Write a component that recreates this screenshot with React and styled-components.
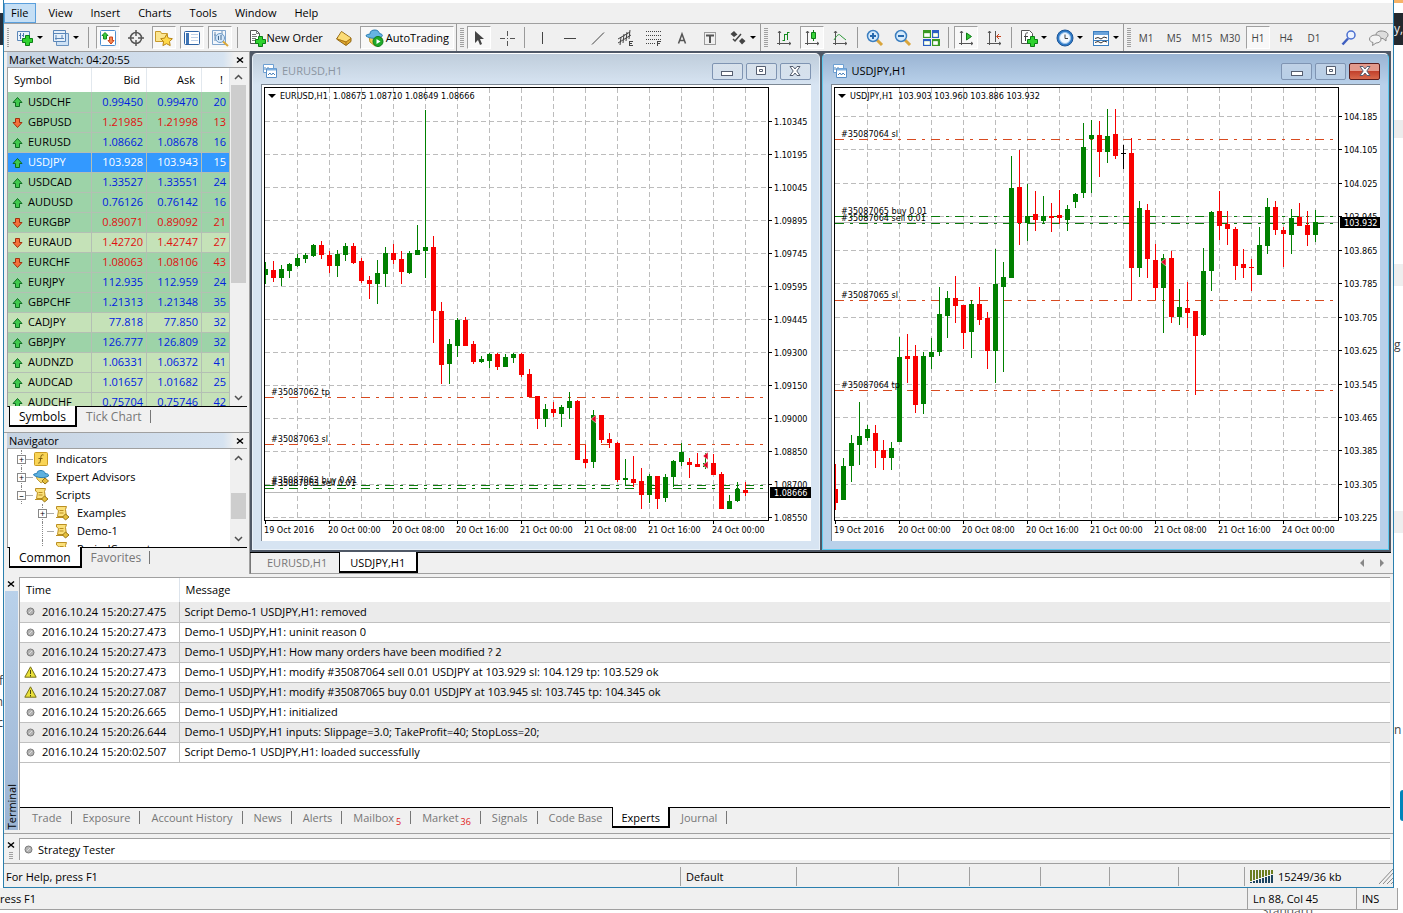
import React from 'react'
import styled, { createGlobalStyle } from 'styled-components'


const quotes = [
    ['USDCHF', 'up', '0.99450', '0.99470', 20, 0],
    ['GBPUSD', 'down', '1.21985', '1.21998', 13, 0],
    ['EURUSD', 'up', '1.08662', '1.08678', 16, 0],
    ['USDJPY', 'up', '103.928', '103.943', 15, 2],
    ['USDCAD', 'up', '1.33527', '1.33551', 24, 0],
    ['AUDUSD', 'up', '0.76126', '0.76142', 16, 0],
    ['EURGBP', 'down', '0.89071', '0.89092', 21, 0],
    ['EURAUD', 'down', '1.42720', '1.42747', 27, 1],
    ['EURCHF', 'down', '1.08063', '1.08106', 43, 0],
    ['EURJPY', 'up', '112.935', '112.959', 24, 0],
    ['GBPCHF', 'up', '1.21313', '1.21348', 35, 0],
    ['CADJPY', 'up', '77.818', '77.850', 32, 1],
    ['GBPJPY', 'up', '126.777', '126.809', 32, 0],
    ['AUDNZD', 'up', '1.06331', '1.06372', 41, 1],
    ['AUDCAD', 'up', '1.01657', '1.01682', 25, 1],
    ['AUDCHF', 'up', '0.75704', '0.75746', 42, 1],
]

const logs = [
    ['2016.10.24 15:20:27.475', 'Script Demo-1 USDJPY,H1: removed'],
    ['2016.10.24 15:20:27.473', 'Demo-1 USDJPY,H1: uninit reason 0'],
    ['2016.10.24 15:20:27.473', 'Demo-1 USDJPY,H1: How many orders have been modified ? 2'],
    ['2016.10.24 15:20:27.473', 'Demo-1 USDJPY,H1: modify #35087064 sell 0.01 USDJPY at 103.929 sl: 104.129 tp: 103.529 ok', true],
    ['2016.10.24 15:20:27.087', 'Demo-1 USDJPY,H1: modify #35087065 buy 0.01 USDJPY at 103.945 sl: 103.745 tp: 104.345 ok', true],
    ['2016.10.24 15:20:26.665', 'Demo-1 USDJPY,H1: initialized'],
    ['2016.10.24 15:20:26.644', 'Demo-1 USDJPY,H1 inputs: Slippage=3.0; TakeProfit=40; StopLoss=20;'],
    ['2016.10.24 15:20:02.507', 'Script Demo-1 USDJPY,H1: loaded successfully'],
]

const terminalTabs = ['Trade', 'Exposure', 'Account History', 'News', 'Alerts', 'Mailbox', 'Market', 'Signals', 'Code Base', 'Experts', 'Journal']
const tabCounts = { Mailbox: 5, Market: 36 }

// candles: wick top, wick bottom, body top, body bottom, colour
const eurusd = {
    title: 'EURUSD,H1',
    info: 'EURUSD,H1  1.08675 1.08710 1.08649 1.08666',
    prices: [['1.10345', 36], ['1.10195', 69], ['1.10045', 102], ['1.09895', 135], ['1.09745', 168], ['1.09595', 201], ['1.09445', 234], ['1.09300', 267], ['1.09150', 300], ['1.09000', 333], ['1.08850', 366], ['1.08700', 399], ['1.08550', 432]],
    current: ['1.08666', 407],
    levels: [[312, '#d84a20', '#35087062 tp'], [359, '#d84a20', '#35087063 sl'], [400, '#0a7a0a', '#35087062 buy 0.01'], [403, '#0a7a0a', '#35087063 sell 0.01']],
    marks: [[329, 334], [441, 371], [441, 380]],
    candles: `262 284 269 275 g|261 282 270 278 r|265 286 269 278 g|263 278 264 271 g|254 267 258 266 g|253 263 255 259 g|244 257 245 256 g|241 259 245 255 r|251 273 255 266 r|250 277 254 266 g|243 261 246 255 g|243 264 246 263 r|258 283 261 281 r|276 299 280 284 r|260 304 273 284 g|247 287 253 274 g|244 264 253 260 r|251 284 259 272 r|251 274 253 273 g|225 255 250 255 g|110 278 247 251 g|236 343 247 311 r|302 384 311 365 r|339 384 344 364 g|318 357 320 346 g|317 346 320 346 r|341 364 344 362 r|356 363 359 362 g|353 368 354 361 g|353 370 354 367 r|354 367 357 367 g|353 363 354 358 g|353 377 354 375 r|369 397 374 397 r|396 429 396 419 r|404 427 409 419 g|402 417 409 413 r|405 427 407 414 g|392 419 401 408 g|400 460 401 460 r|445 468 459 463 r|410 468 415 462 g|415 443 415 440 r|433 448 439 443 r|442 482 443 480 r|459 486 478 480 g|456 487 479 483 r|468 509 481 495 r|474 503 476 495 g|476 509 476 499 r|474 502 477 498 g|460 487 461 477 g|443 466 452 462 g|458 478 462 465 r|453 467 464 467 r|453 469 463 467 g|454 475 463 475 r|472 509 474 509 r|495 509 501 509 g|482 502 489 501 g|482 496 490 493 r`,
}

const usdjpy = {
    title: 'USDJPY,H1',
    info: 'USDJPY,H1  103.903 103.960 103.886 103.932',
    prices: [['104.185', 31], ['104.105', 64], ['104.025', 98], ['103.945', 131], ['103.865', 165], ['103.785', 198], ['103.705', 232], ['103.625', 265], ['103.545', 299], ['103.465', 332], ['103.385', 365], ['103.305', 399], ['103.225', 432]],
    current: ['103.932', 137],
    levels: [[54, '#d84a20', '#35087064 sl'], [131, '#0a7a0a', '#35087065 buy 0.01'], [138, '#0a7a0a', '#35087064 sell 0.01'], [215, '#d84a20', '#35087065 sl'], [305, '#d84a20', '#35087064 tp']],
    marks: [[329, 177]],
    candles: `464 510 489 503 r|458 500 466 500 g|435 482 443 466 g|402 465 436 445 g|425 441 429 438 g|425 468 433 451 r|440 470 450 458 r|442 470 448 458 g|337 442 357 442 g|334 383 356 359 r|345 413 356 405 r|352 414 356 404 g|338 369 352 357 g|287 356 314 352 g|291 338 298 316 g|276 323 298 306 r|305 349 305 333 r|300 358 304 332 g|287 325 304 320 r|312 369 318 351 r|249 383 284 351 g|262 372 277 287 g|156 278 188 278 g|150 245 187 223 r|184 241 216 223 g|191 231 214 220 r|196 223 216 221 g|203 232 216 218 r|190 224 215 218 r|205 231 209 220 g|193 208 194 202 g|123 198 147 193 g|120 193 135 139 g|121 177 135 152 r|109 163 136 152 g|109 159 134 156 r|145 169 153 154 k|138 300 153 268 r|201 277 208 268 g|204 278 210 259 r|244 300 260 288 r|254 333 258 288 g|251 323 258 317 r|289 325 307 317 g|282 328 308 313 r|311 395 311 336 r|248 336 271 335 g|211 291 212 271 g|191 240 211 226 r|211 245 224 229 r|227 280 229 266 r|249 278 264 268 r|259 291 267 268 r|227 275 245 275 g|198 254 207 246 g|201 235 207 230 r|227 267 230 234 r|209 254 218 235 g|203 226 217 226 r|211 246 225 235 r|210 242 222 235 g`,
}

const dates = ['19 Oct 2016', '20 Oct 00:00', '20 Oct 08:00', '20 Oct 16:00', '21 Oct 00:00', '21 Oct 08:00', '21 Oct 16:00', '24 Oct 00:00']
const fills = { g: '#008000', r: '#f80000', k: '#000' }


function Svg({ w = 18, h = 18, children }) {
    return <svg width={w} height={h} viewBox={`0 0 ${w} ${h}`} fill="none" aria-hidden="true">{children}</svg>
}

const Plus = ({ x, y }) => <path transform={`translate(${x} ${y})`} d="M3.5 .5h4v3h3v4h-3v3h-4v-3h-3v-4h3z" fill="#2fd22f" stroke="#0a7d14" />

const icons = {
    newChart: <Svg><path d="M1.500 2.500h12v9h-12z" fill="#eaf3fc" stroke="#5a86b8" /><path d="M4.500 4v6M3 6.500h2M7.500 4v4M6 6.500h2" stroke="#4b79ad" /><Plus x={6} y={6} /></Svg>,
    profiles: <Svg><path d="M4.500 4.500h12v12h-12z" fill="#cfe2f5" stroke="#6a92be" /><path d="M1.500 1.500h12v11h-12z" fill="#e6f0fa" stroke="#5a86b8" /><path d="M2 4.500h11M4 6v5M10 6v4M3 9.500h9" stroke="#5a86b8" /></Svg>,
    market: <Svg><rect x="1.500" y="1.500" width="15" height="15" rx="1" fill="#fff" stroke="#4c8fd0" /><path d="M6 3.500l3 3H7.500V10h-3V6.500H3z" fill="#3ecb3e" stroke="#148a1e" /><path d="M12 15l-3-3.500h1.500V8h3v3.500H15z" fill="#f58a52" stroke="#c8431c" /></Svg>,
    target: <Svg><circle cx="9" cy="9" r="5.500" stroke="#555" strokeWidth="1.500" /><path d="M9 1v6M9 11v6M1 9h6M11 9h6" stroke="#555" strokeWidth="1.500" /></Svg>,
    favorites: <Svg w={20}><path d="M1.500 12.500v-10h5l1 2h6v8z" fill="#fbe692" stroke="#c89a2c" /><path d="M12.500 5.500l1.900 3.600 4 .6-2.900 2.900.7 4-3.700-1.900-3.600 1.900.7-4-2.900-2.900 4-.6z" fill="#ffd94a" stroke="#b98514" /></Svg>,
    list: <Svg><rect x="1.500" y="2.500" width="15" height="13" rx="1" fill="#fff" stroke="#2d62a3" /><path d="M3 4h3v11H3z" fill="#3f75b5" /><path d="M8 5.500h7M8 8.500h7M8 11.500h7" stroke="#bdd0e8" /></Svg>,
    tester: <Svg w={20}><path d="M2.500 1.500h13v14h-13z" fill="#f2f6fb" stroke="#7fa4cc" /><path d="M5 3v9M4 6h2M12 2v5M8 5v5" stroke="#6d8fb4" /><circle cx="10" cy="9" r="4.500" fill="#cfe6fb" fillOpacity=".8" stroke="#6d9bc8" /><path d="M8.500 7v4M11 6v5" stroke="#43698f" /><path d="M13 12.500l5 4.500" stroke="#dba93a" strokeWidth="2" /></Svg>,
    order: <Svg><path d="M2.500 1.500h6l3 3v10h-9z" fill="#fff" stroke="#555" /><path d="M8.500 1.500v3h3M4 5.500h4M4 7.500h5M4 9.500h4M4 11.500h3" stroke="#777" /><Plus x={7} y={7} /></Svg>,
    gold: <Svg><path d="M1.500 10l5-7.500 9.500 6.500v3.500l-5 4z" fill="#e2a92e" stroke="#8f6614" /><path d="M6.500 3l9 6-4 3.500-9-3z" fill="#fbdc78" /><path d="M2 10l9 3 5-3.500M11 13v3" stroke="#a97616" /></Svg>,
    robot: <Svg w={20}><path d="M4 7l7 1 6 1-2 6-5 2-5-4z" fill="#f5cf54" stroke="#bd9226" /><path d="M1 7c0-2 3-1.500 4-2 0-3 2-4 5-4s4 2 4.500 3.500C17 5 18 6 17 7.500 13 10 5 10 1 7z" fill="#66b4e2" stroke="#2c7fb5" /><circle cx="13" cy="12.500" r="5" fill="#1faa2a" stroke="#0e7d18" /><path d="M11.500 10v5l4-2.500z" fill="#fff" /></Svg>,
    cursor: <Svg><path d="M5 2v12l3-3 2 5 2-1-2-5h4z" fill="#444" /></Svg>,
    cross: <Svg><path d="M9.500 2v5M9.500 12v5M2 9.500h5M12 9.500h5M9 9.500h1" stroke="#555" /></Svg>,
    vline: <Svg><path d="M9.500 3v12" stroke="#444" /></Svg>,
    hline: <Svg><path d="M3 9.500h12" stroke="#444" /></Svg>,
    trend: <Svg><path d="M3 15.500L15 3.500" stroke="#444" /></Svg>,
    channel: <Svg><path d="M1 10l12-7M1 14L14 6M4 8l-1 8M7 5L6 14M10 3L9 12M13 1l-1 9" stroke="#444" /><path d="M12.500 12v5M12 12.500h4M12 14.500h3M12 16.500h4" stroke="#444" /></Svg>,
    fibo: <Svg><path d="M1 2.500h15M1 6.500h15M1 10.500h15M1 14.500h9" stroke="#444" strokeDasharray="1 1" /><path d="M12.500 12v5M12 12.500h4M12 14.500h3" stroke="#444" /></Svg>,
    textA: <Svg><path d="M5.500 14.500L9 5l3.500 9.500M6.500 11.500h5" stroke="#555" strokeWidth="1.500" /></Svg>,
    textT: <Svg><path d="M3.500 3.500h11v12h-11z" stroke="#444" strokeDasharray="1 1" /><path d="M5 6.500h8M9 6v8" stroke="#555" strokeWidth="2" /></Svg>,
    shapes: <Svg><path d="M5 2l3.500 3.500L5 8 1.500 5zM13 9l3.500 3-3.500 3.500L10 12z" fill="#444" /><path d="M4 10l2 2 6-7" stroke="#444" strokeWidth="1.500" /></Svg>,
    bars: <Svg><path d="M4.500 2v14M2 14.500h14M3 4l1.500-2L6 4M14 13l2 1.500-2 1.500" stroke="#555" /><path d="M9.500 5v7M7.500 11.500h2M12.500 3v8M12.500 3.500h2M10 5.500h2" stroke="#148a1e" /></Svg>,
    candles: <Svg><path d="M4.500 2v14M2 14.500h14M3 4l1.500-2L6 4M14 13l2 1.500-2 1.500" stroke="#555" /><path d="M10.500 1v11" stroke="#0e7d18" /><path d="M8.500 3.500h4v6h-4z" fill="#39d339" stroke="#0e7d18" /></Svg>,
    line: <Svg><path d="M4.500 2v14M2 14.500h14M3 4l1.500-2L6 4M14 13l2 1.500-2 1.500" stroke="#555" /><path d="M3 11c3-5 5-7 7-4l5 4" stroke="#2f9a3a" /></Svg>,
    zoomIn: <Svg><path d="M11 11l5 5" stroke="#d9a53c" strokeWidth="3" /><circle cx="7" cy="7" r="5.500" fill="#d6ebfc" stroke="#3c7fc0" strokeWidth="1.500" /><path d="M4 7h6M7 4v6" stroke="#2769ad" strokeWidth="2" /></Svg>,
    zoomOut: <Svg><path d="M11 11l5 5" stroke="#d9a53c" strokeWidth="3" /><circle cx="7" cy="7" r="5.500" fill="#d6ebfc" stroke="#3c7fc0" strokeWidth="1.500" /><path d="M4 7h6" stroke="#2769ad" strokeWidth="2" /></Svg>,
    tile: <Svg><path d="M1 1h8v8H1zM10 10h8v7h-8z" fill="#3a9a23" /><path d="M10 1h7v8h-7zM1 10h8v7H1z" fill="#2c5fc4" /><path d="M2.500 4.500h5v3h-5zM11.500 4.500h4v3h-4zM2.500 12.500h5v3h-5zM11.500 12.500h4v3h-4z" fill="#fff" stroke="#dff0d8" /></Svg>,
    scroll: <Svg><path d="M4.500 2v14M2 14.500h14M3 4l1.500-2L6 4M14 13l2 1.500-2 1.500" stroke="#555" /><path d="M9.500 4v7l5-3.500z" fill="#35c435" stroke="#0e7d18" /></Svg>,
    shift: <Svg><path d="M4.500 2v14M2 14.500h14M3 4l1.500-2L6 4M14 13l2 1.500-2 1.500M10.500 2v11" stroke="#555" /><path d="M16 7.500h-4M14 5l-2.500 2.500L14 10" stroke="#c8431c" /></Svg>,
    indicators: <Svg><path d="M1.500 1.500h8l3 3v10h-11z" fill="#fff" stroke="#555" /><path d="M8 4c-2-1-2.500 1-2.500 3v5M4 7.500h4" stroke="#444" /><Plus x={7} y={7} /></Svg>,
    clock: <Svg><circle cx="9" cy="9" r="8" fill="#2f7bc8" stroke="#1d5596" /><circle cx="9" cy="9" r="5.500" fill="#f2f8ff" stroke="#9cc3ea" /><path d="M9 5.500V9.500h3" stroke="#444" /></Svg>,
    template: <Svg><rect x="1.500" y="2.500" width="15" height="14" fill="#fff" stroke="#3c7fc0" /><path d="M2 3h14v3H2z" fill="#6ba3da" /><path d="M3 9.500l3-1 3 1.500 3-2 3 1M3 13.500l3-1 3 1.500 3-2 3 1" stroke="#333" /><path d="M2 11.500h14" stroke="#3c7fc0" /></Svg>,
    search: <Svg><circle cx="11" cy="6" r="4" fill="#eef4ff" stroke="#4a6fd0" strokeWidth="1.500" /><path d="M8 9.500l-5.500 6" stroke="#3f5fc0" strokeWidth="2.500" /></Svg>,
    chat: <Svg w={22}><path d="M13 2c4 0 7 1.500 7 4 0 1.500-1 2.500-2 3v3l-3-2.500C10 9.500 8 8.500 8 6s2-4 5-4z" fill="#ddd" stroke="#8a8a8a" /><path d="M7 6c4 0 6 1.500 6 4s-2 4-5 4l-3.500 2.500.5-3C3 13 1.500 12 1.500 10S4 6 7 6z" fill="#f4f4f4" stroke="#8a8a8a" /></Svg>,
    window: <Svg w={14} h={14}><path d="M.5 .5h10v8H.500z" fill="#fff" stroke="#6d9fd2" /><path d="M3.500 4.500h10v9h-10z" fill="#fff" stroke="#5b90c8" /><path d="M4 5.500h9" stroke="#7fb0e0" strokeWidth="2" /><path d="M5 11l2-2 1.500 2L10 9l2 2M2 6V3M5 3v1" stroke="#4b82bb" /></Svg>,
    up: <Svg w={11} h={11}><path d="M5.500 1.500l4.500 5h-2.500v4h-4v-4H1z" fill="#3fc94c" stroke="#0c6b1f" /></Svg>,
    down: <Svg w={11} h={11}><path d="M5.500 10.500l-4.500-5h2.500v-4h4v4H10z" fill="#f5703a" stroke="#a3300e" /></Svg>,
    dot: <Svg w={9} h={9}><circle cx="4.500" cy="4.500" r="3.500" fill="#b4b4b4" stroke="#7b7b7b" /><path d="M3 6l3-3" stroke="#ddd" /></Svg>,
    warn: <Svg w={13} h={12}><path d="M6.500 .8l5.700 10.400H.8z" fill="#e9e03a" stroke="#77721a" /><path d="M6.500 4v4M6.500 9v1.500" stroke="#4b4810" /></Svg>,
    indicator: <Svg w={16} h={16}><rect x="1.500" y="1.500" width="13" height="13" rx="1" fill="#f9d455" stroke="#c99a22" /><path d="M10.500 4c-2-.8-2.500.5-2.700 2.500l-.6 4c-.3 1.500-1 2-2 1.500M5.500 7.500h4" stroke="#7d5d0c" /></Svg>,
    expert: <Svg w={16} h={16}><path d="M3 6l9 1-1 5-3 2-4-4z" fill="#f5d970" stroke="#c2a03a" /><path d="M.5 6C1 4 3 5 4 4.500 4 2 6 1.500 8 1.500s4 1 4 3c2 .2 4 .5 3.500 2.500C12 9.500 4 9 .5 6z" fill="#5db0df" stroke="#2a7eb4" /><path d="M12 9l3.500 3-3.500 3-3-3z" fill="#e5bf3c" stroke="#987516" /></Svg>,
    script: <Svg w={16} h={16}><path d="M2.500 1.500h10l-1 3 1 7h-9l1-6-2-1.500z" fill="#fbe07a" stroke="#bb8f22" /><path d="M2 12.500h8M5.500 5.500h4M5.500 8h4" stroke="#bb8f22" /><path d="M11.500 9l3.500 3-3.500 3-3-3z" fill="#e5bf3c" stroke="#987516" /></Svg>,
    min: <Svg w={12} h={10}><rect x=".5" y="5.500" width="11" height="4" fill="#fff" stroke="#555e70" /></Svg>,
    max: <Svg w={12} h={10}><path d="M1.500 .5h9v8h-9z" fill="#fff" stroke="#555e70" /><path d="M4.500 3.500h3v2h-3z" stroke="#555e70" /></Svg>,
    close: <Svg w={12} h={10}><path d="M1 .5h3l2 2.500 2-2.500h3L7.800 5 11 9.500H8L6 7 4 9.500H1L4.200 5z" fill="#fff" stroke="#555e70" /></Svg>,
    x: <Svg w={8} h={8}><path d="M1 1.500l6 5M7 1.500l-6 5" stroke="#000" strokeWidth="1.500" /></Svg>,
    chevUp: <Svg w={9} h={6}><path d="M1 5l3.500-3.500L8 5" stroke="#505050" strokeWidth="1.500" /></Svg>,
    chevDown: <Svg w={9} h={6}><path d="M1 1l3.500 3.500L8 1" stroke="#505050" strokeWidth="1.500" /></Svg>,
    left: <Svg w={5} h={8}><path d="M4 0v8L0 4z" fill="#888" /></Svg>,
    right: <Svg w={5} h={8}><path d="M1 0v8l4-4z" fill="#888" /></Svg>,
    grip: <Svg w={14} h={15}><path d="M0 15L14 0M4 15L14 4M8 15l6-6M12 15l2-2" stroke="#888" /></Svg>,
    traffic: <Svg w={24} h={14}>
        {[0, 1, 2, 3, 4, 5, 6, 7].map(i => <g key={i}><path d={`M${i * 3 + 1} 0v${11 - i}`} stroke="#6b7d1e" strokeWidth="2" /><path d={`M${i * 3 + 1} ${12 - i}V13`} stroke="#1c4360" strokeWidth="2" /></g>)}
    </Svg>,
}


function Tool({ icon, label, caret, on, children }) {
    return (
        <ToolButton type="button" aria-label={label} $caret={caret} $on={on} $wide={!!children}>
            {icons[icon]}
            {children}
            {caret && <Caret />}
        </ToolButton>
    )
}

function Toolbar() {
    return (
        <ToolbarRow>
            <ToolGroup>
                <Handle $gap={2} />
                <Tool icon="newChart" label="New chart" caret />
                <Tool icon="profiles" label="Profiles" caret />
                <Separator $gap={5} />
                <Tool icon="market" label="Market Watch" on />
                <Tool icon="target" label="Data Window" />
                <Tool icon="favorites" label="Navigator" on />
                <Tool icon="list" label="Terminal" on />
                <Tool icon="tester" label="Strategy Tester" on />
                <Separator $gap={3} />
                <Tool icon="order" label="New Order">New Order</Tool>
                <Tool icon="gold" label="MetaEditor" />
                <Tool icon="robot" label="AutoTrading" on>AutoTrading</Tool>
            </ToolGroup>
            <ToolGroup>
                <Handle $gap={1} />
                <Tool icon="cursor" label="Cursor" on />
                <Tool icon="cross" label="Crosshair" />
                <Separator $gap={3} />
                <Tool icon="vline" label="Vertical line" />
                <Tool icon="hline" label="Horizontal line" />
                <Tool icon="trend" label="Trendline" />
                <Tool icon="channel" label="Equidistant channel" />
                <Tool icon="fibo" label="Fibonacci retracement" />
                <Tool icon="textA" label="Text" />
                <Tool icon="textT" label="Text label" />
                <Tool icon="shapes" label="Arrows" caret />
            </ToolGroup>
            <ToolGroup>
                <Handle $gap={2} />
                <Tool icon="bars" label="Bar chart" />
                <Tool icon="candles" label="Candlesticks" on />
                <Tool icon="line" label="Line chart" />
                <Separator $gap={3} />
                <Tool icon="zoomIn" label="Zoom in" />
                <Tool icon="zoomOut" label="Zoom out" />
                <Tool icon="tile" label="Tile windows" />
                <Separator $gap={3} />
                <Tool icon="scroll" label="Auto scroll" on />
                <Tool icon="shift" label="Chart shift" />
                <Separator $gap={3} />
                <Tool icon="indicators" label="Indicators" caret />
                <Tool icon="clock" label="Periods" caret />
                <Tool icon="template" label="Templates" caret />
            </ToolGroup>
            <ToolGroup $last>
                <Handle $gap={1} />
                {['M1', 'M5', 'M15', 'M30', 'H1', 'H4', 'D1'].map(p => (
                    <PeriodButton type="button" key={p} $on={p === 'H1'}>{p}</PeriodButton>
                ))}
            </ToolGroup>
            <ToolEnd>
                <Tool icon="search" label="Search" />
                <Tool icon="chat" label="Community" />
            </ToolEnd>
        </ToolbarRow>
    )
}

function Scroll({ top, size }) {
    return (
        <ScrollBar>
            <ScrollButton type="button" aria-label="Scroll up">{icons.chevUp}</ScrollButton>
            <ScrollTrack><ScrollThumb $top={top} $size={size} /></ScrollTrack>
            <ScrollButton type="button" aria-label="Scroll down">{icons.chevDown}</ScrollButton>
        </ScrollBar>
    )
}

function MarketWatch() {
    return (
        <Pane>
            <PaneTitle><span>Market Watch: 04:20:55</span><CloseButton type="button" aria-label="Close">{icons.x}</CloseButton></PaneTitle>
            <PaneBody $height={340}>
                <Clip>
                    <QuoteTable>
                        <colgroup><col /><col width="55" /><col width="55" /><col width="28" /></colgroup>
                        <thead><tr><th>Symbol</th><th>Bid</th><th>Ask</th><th>!</th></tr></thead>
                        <tbody>
                            {quotes.map(([symbol, dir, bid, ask, spread, tone]) => (
                                <QuoteRow key={symbol} $dir={dir} $tone={tone}>
                                    <td><Symbol>{icons[dir]}{symbol}</Symbol></td>
                                    <td>{bid}</td>
                                    <td>{ask}</td>
                                    <td>{spread}</td>
                                </QuoteRow>
                            ))}
                        </tbody>
                    </QuoteTable>
                </Clip>
                <Scroll top={0} size={198} />
            </PaneBody>
            <PaneTabs>
                <PaneTab type="button" $on>Symbols</PaneTab>
                <PaneTab type="button">Tick Chart</PaneTab>
            </PaneTabs>
        </Pane>
    )
}

function Navigator() {
    const nodes = [
        ['Indicators', 'indicator', '+', 0],
        ['Expert Advisors', 'expert', '+', 0],
        ['Scripts', 'script', '–', 0],
        ['Examples', 'script', '+', 1],
        ['Demo-1', 'script', '', 1],
        ['PeriodConverter', 'script', '', 1],
    ]
    return (
        <Pane $grow>
            <PaneTitle><span>Navigator</span><CloseButton type="button" aria-label="Close">{icons.x}</CloseButton></PaneTitle>
            <PaneBody $height={100}>
                <Clip>
                    <Tree>
                        {nodes.map(([name, icon, sign, level]) => (
                            <TreeRow key={name} $level={level}>
                                <TreeLine>{sign && <Expander type="button" aria-label={name}>{sign}</Expander>}</TreeLine>
                                {icons[icon]}
                                <TreeLabel>{name}</TreeLabel>
                            </TreeRow>
                        ))}
                    </Tree>
                </Clip>
                <Scroll top={27} size={26} />
            </PaneBody>
            <PaneTabs>
                <PaneTab type="button" $on>Common</PaneTab>
                <PaneTab type="button">Favorites</PaneTab>
            </PaneTabs>
        </Pane>
    )
}

function Chart({ data }) {
    const candles = data.candles.split('|').map(c => c.split(' '))
    return (
        <ChartSvg role="img" aria-label={data.title}>
            <g shapeRendering="crispEdges" fill="none">
                {[...Array(15)].map((_, i) => <path key={i} d={`M${35.5 + i * 32} 3V435`} stroke="#bcbcbc" strokeDasharray="5 3" />)}
                {data.prices.map(([p, y]) => <path key={p} d={`M3 ${y + .5}H506`} stroke="#bcbcbc" strokeDasharray="5 3" />)}
                <path d={`M3 ${data.current[1] + .5}H506`} stroke="#b8b8b8" />
                {data.levels.map(([y, c], i) => <path key={i} d={`M3 ${y + .5}H501`} stroke={c} strokeDasharray="9 6 3 6" />)}
                {candles.map(([t, b, o, c, k], i) => {
                    const x = 3 + i * 8
                    const left = i === 0 ? 3 : x - 2
                    return (
                        <g key={i} fill={fills[k]}>
                            <rect x={x} y={t - 85} width="1" height={b - t} />
                            <rect x={left} y={o - 85} width={x + 3 - left} height={c - o} />
                        </g>
                    )
                })}
                <path d="M2.500 435V2.500H506.500V435.500H2" stroke="#000" />
                {data.prices.map(([p, y]) => <path key={p} d={`M507 ${y + .5}h3`} stroke="#000" />)}
                {dates.map((d, i) => <path key={d} d={`M${3.5 + i * 64} 436v3`} stroke="#000" />)}
            </g>
            {data.marks.map(([x, y]) => <path key={y} d={`M${x} ${y}l5-4v8z`} fill="#e00020" stroke="#fff" strokeWidth=".5" />)}
            <path d="M6 9h8l-4 4z" fill="#000" />
            <ChartText x="18" y="14">{data.info}</ChartText>
            {data.levels.map(([y, c, label]) => <ChartText key={label} x="9" y={y - 2}>{label}</ChartText>)}
            {data.prices.map(([p, y]) => <ChartText key={p} x="512" y={y + 4}>{p}</ChartText>)}
            <rect x="508" y={data.current[1] - 5} width="41" height="11" fill="#000" />
            <ChartText x="512" y={data.current[1] + 4} $light>{data.current[0]}</ChartText>
            {dates.map((d, i) => <ChartText key={d} x={2 + i * 64} y="448">{d}</ChartText>)}
        </ChartSvg>
    )
}

function ChartWindow({ data, active }) {
    return (
        <WindowFrame $active={active}>
            <WindowTitle $active={active}>
                {icons.window}
                <span>{data.title}</span>
                <WindowButtons>
                    <WindowButton type="button" aria-label="Minimize">{icons.min}</WindowButton>
                    <WindowButton type="button" aria-label="Maximize">{icons.max}</WindowButton>
                    <WindowButton type="button" aria-label="Close" $danger={active}>{icons.close}</WindowButton>
                </WindowButtons>
            </WindowTitle>
            <WindowBody><Chart data={data} /></WindowBody>
        </WindowFrame>
    )
}

function Terminal() {
    return (
        <TerminalDock>
            <DockSide>
                <CloseButton type="button" aria-label="Close">{icons.x}</CloseButton>
                <DockLabel><span>Terminal</span></DockLabel>
            </DockSide>
            <DockMain>
                <LogArea>
                    <LogTable>
                        <colgroup><col width="159" /><col /></colgroup>
                        <thead><tr><th>Time</th><th>Message</th></tr></thead>
                        <tbody>
                            {logs.map(([time, text, warn], i) => (
                                <tr key={i}>
                                    <td><LogTime><LogIcon>{warn ? icons.warn : icons.dot}</LogIcon>{time}</LogTime></td>
                                    <td>{text}</td>
                                </tr>
                            ))}
                        </tbody>
                    </LogTable>
                </LogArea>
                <DockTabs>
                    {terminalTabs.map(t => (
                        <DockTab type="button" key={t} $on={t === 'Experts'} $plain={t === 'Code Base'}>
                            {t}{tabCounts[t] && <sub>{tabCounts[t]}</sub>}
                        </DockTab>
                    ))}
                </DockTabs>
            </DockMain>
        </TerminalDock>
    )
}

export default function App() {
    return (
        <Desktop>
            <GlobalStyle />
            <Stage>
                <LeftEdge>
                    <EdgeBlock $h={13} />
                    <EdgeBlock $h={32} $bg="#26303c" />
                    <EdgeBlock $h={625} />
                    <EdgeBlock $h={22}>of</EdgeBlock>
                    <EdgeBlock $h={20}>n</EdgeBlock>
                    <EdgeBlock $h={22}>c</EdgeBlock>
                </LeftEdge>
                <MainWindow>
                    <MenuBar>
                        {['File', 'View', 'Insert', 'Charts', 'Tools', 'Window', 'Help'].map(m => (
                            <MenuButton type="button" key={m} $on={m === 'File'}>{m}</MenuButton>
                        ))}
                    </MenuBar>
                    <Toolbar />
                    <Workspace>
                        <SideColumn>
                            <MarketWatch />
                            <Navigator />
                        </SideColumn>
                        <MdiColumn>
                            <MdiArea>
                                <ChartWindow data={eurusd} />
                                <ChartWindow data={usdjpy} active />
                            </MdiArea>
                            <MdiTabs>
                                <MdiTab type="button">EURUSD,H1</MdiTab>
                                <MdiTab type="button" $on>USDJPY,H1</MdiTab>
                                <MdiArrows>
                                    <CloseButton type="button" aria-label="Previous">{icons.left}</CloseButton>
                                    <CloseButton type="button" aria-label="Next">{icons.right}</CloseButton>
                                </MdiArrows>
                            </MdiTabs>
                        </MdiColumn>
                    </Workspace>
                    <Terminal />
                    <TesterDock>
                        <TesterSide>
                            <CloseButton type="button" aria-label="Close">{icons.x}</CloseButton>
                            <TesterGrip />
                        </TesterSide>
                        <TesterBox>{icons.dot}<span>Strategy Tester</span></TesterBox>
                    </TesterDock>
                    <StatusBar>
                        <StatusCell>For Help, press F1</StatusCell>
                        <StatusCell>Default</StatusCell>
                        <StatusCell /><StatusCell /><StatusCell /><StatusCell /><StatusCell /><StatusCell />
                        <StatusCell>{icons.traffic}<span>15249/36 kb</span><Grip>{icons.grip}</Grip></StatusCell>
                    </StatusBar>
                </MainWindow>
                <RightEdge>
                    <EdgeBlock $h={3} $bg="#f7b266" />
                    <EdgeBlock $h={10} />
                    <EdgeBlock $h={32} $bg="#23282d" $light>y,</EdgeBlock>
                    <EdgeBlock $h={30} />
                    <EdgeBlock $h={45} />
                    <EdgeBlock $h={18} $bg="#ececec" />
                    <EdgeBlock $h={126} />
                    <EdgeBlock $h={22} $bg="#eee" />
                    <EdgeBlock $h={46} />
                    <EdgeBlock $h={26}>g</EdgeBlock>
                    <EdgeBlock $h={153} />
                    <EdgeBlock $h={22} $bg="#eee" />
                    <EdgeBlock $h={184} />
                    <EdgeBlock $h={26}>n</EdgeBlock>
                    <EdgeBlock $h={47} />
                    <EdgeBlock $h={31} $button />
                </RightEdge>
            </Stage>
            <EditorBar>
                <EditorCell>ress F1</EditorCell>
                <EditorCell>Ln 88, Col 45</EditorCell>
                <EditorCell>INS</EditorCell>
            </EditorBar>
            <BottomEdge><span>Standard</span></BottomEdge>
        </Desktop>
    )
}


const GlobalStyle = createGlobalStyle`
    * {
        box-sizing: border-box;
    }
    body {
        margin: 0;
        background: #fff;
        color: #000;
        font: 11px/16px "Open Sans", "Noto Sans", sans-serif;
    }
    button {
        font: inherit;
        color: inherit;
        border: 0;
        padding: 0;
        background: none;
    }
    svg {
        flex: none;
        display: block;
    }
    table {
        border-collapse: collapse;
        table-layout: fixed;
        width: 100%;
    }
    th, td {
        font-weight: 400;
        text-align: left;
        white-space: nowrap;
        overflow: hidden;
    }
`

const Desktop = styled.div`
    display: flex;
    flex-direction: column;
    min-height: 100vh;
    overflow: hidden;
`
const Stage = styled.div`
    flex: 1;
    display: flex;
`
const LeftEdge = styled.div`
    width: 3px;
    overflow: hidden;
    > div {
        justify-content: flex-end;
    }
`
const RightEdge = styled.div`
    width: 9px;
    overflow: hidden;
`
const EdgeBlock = styled.div`
    display: flex;
    align-items: center;
    height: ${p => p.$h}px;
    background: ${p => p.$bg || '#fff'};
    color: ${p => p.$light ? '#eee' : '#444'};
    font-size: 12px;
    ${p => p.$button && `
        margin-left: 6px;
        border-radius: 3px 0 0 3px;
        background: #0085ba;
    `}
`
const MainWindow = styled.main`
    flex: 1;
    min-width: 0;
    display: flex;
    flex-direction: column;
    border: solid #2a7fae;
    border-width: 0 1px 1px;
    background: #f0f0f0;
`
const MenuBar = styled.nav`
    display: flex;
    height: 23px;
    border-top: 3px solid #fff;
`
const MenuButton = styled.button`
    line-height: 18px;
    padding: 0 8px;
    border: 1px solid ${p => p.$on ? '#5a9fdc' : 'transparent'};
    background: ${p => p.$on ? '#c5dff5' : 'none'};
    &:first-child {
        padding: 0 7px 0 6px;
        margin-right: 3px;
    }
`
const ToolbarRow = styled.div`
    display: flex;
    height: 28px;
    border-top: 1px solid #a0a0a0;
`
const ToolGroup = styled.div`
    display: flex;
    align-items: center;
    border-right: ${p => p.$last ? 0 : '1px solid #9a9a9a'};
`
const ToolEnd = styled.div`
    display: flex;
    align-items: center;
    gap: 2px;
    margin-left: 7px;
`
const Handle = styled.i`
    width: 4px;
    height: 20px;
    margin: 0 ${p => p.$gap}px 0 3px;
    background: repeating-linear-gradient(#a0a0a0 0 1px, #f0f0f0 1px 2px);
`
const Separator = styled.i`
    width: 1px;
    height: 21px;
    margin: 0 ${p => p.$gap}px;
    background: #9a9a9a;
`
const ToolButton = styled.button`
    display: flex;
    align-items: center;
    justify-content: center;
    gap: ${p => p.$caret ? 3 : 1}px;
    flex: none;
    height: 23px;
    width: ${p => p.$wide ? 'auto' : p.$caret ? '36px' : '24px'};
    margin: 0 ${p => p.$caret ? 0 : 2}px;
    padding: ${p => p.$wide ? '0 4px' : 0};
    border: 1px solid transparent;
    ${p => p.$on && `
        background: #f8f8f8;
        border-color: #a0a0a0 #fff #fff #a0a0a0;
    `}
`
const PeriodButton = styled.button`
    width: 24px;
    height: 23px;
    margin: 0 2px;
    font-size: 10px;
    color: #444;
    border: 1px solid;
    border-color: ${p => p.$on ? '#a0a0a0 #fff #fff #a0a0a0' : 'transparent'};
    background: ${p => p.$on ? '#f8f8f8' : 'none'};
`
const Caret = styled.i`
    border: 3px solid transparent;
    border-top-color: #000;
    border-bottom: 0;
`

const Workspace = styled.div`
    display: flex;
`
const SideColumn = styled.div`
    width: 246px;
    flex: none;
    display: flex;
    flex-direction: column;
    border-top: 1px solid #a0a0a0;
    border-right: 1px solid #a0a0a0;
`
const Pane = styled.section`
    display: flex;
    flex-direction: column;
    padding: 0 2px 4px 3px;
    border-bottom: 1px solid #a0a0a0;
    flex: ${p => p.$grow ? 1 : 'none'};
    & + & {
        border-bottom: 0;
    }
`
const PaneTitle = styled.header`
    display: flex;
    align-items: center;
    justify-content: space-between;
    height: 15px;
    padding-left: 2px;
    line-height: 14px;
    background: linear-gradient(90deg, #c6d3e2, #d6e3f1 90%, #f0f0f0 95%);
`
const CloseButton = styled.button`
    display: grid;
    place-items: center;
    width: 14px;
    height: 14px;
`
const PaneBody = styled.div`
    display: flex;
    height: ${p => p.$height}px;
    background: #fff;
    border: solid #a0a0a0;
    border-width: 1px 0 0 1px;
    border-bottom: 1px solid #000;
`
const Clip = styled.div`
    flex: 1;
    overflow: hidden;
`
const ScrollBar = styled.div`
    width: 17px;
    display: flex;
    flex-direction: column;
    background: #f0f0f0;
`
const ScrollButton = styled.button`
    display: grid;
    place-items: center;
    height: 17px;
`
const ScrollTrack = styled.div`
    flex: 1;
`
const ScrollThumb = styled.div`
    height: ${p => p.$size}px;
    margin: ${p => p.$top}px 1px 0;
    background: #cdcdcd;
`
const QuoteTable = styled.table`
    th {
        height: 24px;
        padding: 0 6px;
        border-right: 1px solid #e2e8ee;
    }
    th + th {
        text-align: right;
    }
`
const QuoteRow = styled.tr`
    background: ${p => ['#9dd3a8', '#c5e2b8', '#3399ff'][p.$tone]};
    td {
        height: 20px;
        padding: 0 3px;
        text-align: right;
        color: ${p => p.$tone === 2 ? '#fff' : p.$dir === 'up' ? '#0020e0' : '#e01010'};
        border: solid #b4bfb4;
        border-width: 0 1px 1px 0;
    }
    td:first-child {
        padding-left: 4px;
        color: ${p => p.$tone === 2 ? '#fff' : '#000'};
    }
`
const Symbol = styled.span`
    display: flex;
    align-items: center;
    gap: 5px;
`
const PaneTabs = styled.div`
    display: flex;
    height: 21px;
    padding-left: 2px;
`
const PaneTab = styled.button`
    align-self: flex-start;
    font-size: 12px;
    height: ${p => p.$on ? 21 : 19}px;
    padding: ${p => p.$on ? '2px 9px 0' : '0 9px'};
    color: ${p => p.$on ? '#000' : '#777'};
    background: ${p => p.$on ? '#fff' : 'linear-gradient(#777, #777) right 3px / 1px 13px no-repeat'};
    ${p => p.$on && `
        border: solid #000;
        border-width: 0 2px 2px 1px;
        margin-top: -1px;
    `}
`
const Tree = styled.ul`
    list-style: none;
    margin: 0;
    padding: 1px 0 0 13px;
`
const TreeRow = styled.li`
    display: flex;
    align-items: center;
    height: 18px;
    padding-left: ${p => p.$level * 21}px;
`
const TreeLine = styled.span`
    display: flex;
    align-items: center;
    width: 12px;
    height: 18px;
    background: linear-gradient(90deg, transparent 5px, #aaa 5px) 0 9px / 100% 1px no-repeat;
    &::before {
        content: '';
        height: 18px;
        margin-right: -6px;
        border-left: 1px dotted #888;
    }
`
const Expander = styled.button`
    flex: none;
    width: 9px;
    height: 9px;
    margin-left: 1px;
    font-size: 9px;
    line-height: 7px;
    border: 1px solid #888;
    background: #fff;
`
const TreeLabel = styled.span`
    margin-left: 7px;
`

const MdiColumn = styled.div`
    flex: 1;
    min-width: 0;
    display: flex;
    flex-direction: column;
`
const MdiArea = styled.div`
    display: flex;
    gap: 2px;
    padding: 2px;
    margin-right: 2px;
    background: #4f5866;
    border-bottom: 1px solid #000;
`
const WindowFrame = styled.section`
    flex: 1;
    min-width: 0;
    padding: 0 8px 8px;
    border: 1px solid ${p => p.$active ? '#5ccbf0' : '#e8f0f8'};
    border-top-color: #fff;
    border-radius: 5px 5px 0 0;
    background: ${p => p.$active
        ? 'linear-gradient(#9ab4d3, #b9d1ea 31px, #b9d1ea)'
        : 'linear-gradient(#bfcddb, #d7e4f2 31px, #d7e4f2)'};
`
const WindowTitle = styled.header`
    display: flex;
    align-items: center;
    gap: 5px;
    height: 30px;
    padding-left: 2px;
    padding-top: 4px;
    color: ${p => p.$active ? '#000' : '#8b95a1'};
`
const WindowButtons = styled.div`
    display: flex;
    gap: 3px;
    margin-left: auto;
`
const WindowButton = styled.button`
    display: grid;
    place-items: center;
    width: 31px;
    height: 17px;
    border: 1px solid ${p => p.$danger ? '#5a1d1d' : '#7f94b2'};
    border-radius: 2px;
    background: ${p => p.$danger ? 'linear-gradient(#e39a8c 50%, #c2412c 50%, #d8694c)' : 'linear-gradient(#ffffff50, #ffffff10)'};
`
const WindowBody = styled.div`
    background: #fff;
    border: solid #7c8793;
    border-width: 1px 0 0 1px;
`
const ChartSvg = styled.svg`
    width: 100%;
    height: 456px;
`
const ChartText = styled.text`
    font: 9px "DejaVu Sans Condensed", "Noto Sans", sans-serif;
    fill: ${p => p.$light ? '#fff' : '#000'};
    white-space: pre;
`
const MdiTabs = styled.div`
    display: flex;
    height: 21px;
    border-left: 1px solid #777;
    border-bottom: 1px solid #a0a0a0;
`
const MdiTab = styled.button`
    align-self: flex-start;
    height: ${p => p.$on ? 21 : 19}px;
    padding: ${p => p.$on ? '2px 11px 0 10px' : '0 11px 0 10px'};
    margin-left: ${p => p.$on ? 1 : 6}px;
    margin-top: ${p => p.$on ? -1 : 0}px;
    color: ${p => p.$on ? '#000' : '#777'};
    background: ${p => p.$on ? '#fff' : 'none'};
    border: solid #000;
    border-width: ${p => p.$on ? '0 2px 2px 1px' : 0};
`
const MdiArrows = styled.div`
    display: flex;
    align-items: center;
    gap: 5px;
    margin: 0 5px 0 auto;
`

const TerminalDock = styled.section`
    flex: 1;
    display: flex;
    padding: 3px 3px 3px 0;
    border-bottom: 1px solid #a0a0a0;
`
const DockSide = styled.div`
    width: 15px;
    display: flex;
    flex-direction: column;
`
const DockLabel = styled.div`
    flex: 1;
    margin-left: 1px;
    width: 13px;
    display: flex;
    align-items: flex-end;
    background: linear-gradient(#b9d1ea, #9bb4d3);
    span {
        writing-mode: vertical-rl;
        transform: rotate(180deg);
        line-height: 13px;
        padding-top: 1px;
    }
`
const DockMain = styled.div`
    flex: 1;
    min-width: 0;
    display: flex;
    flex-direction: column;
    border: solid #a0a0a0;
    border-width: 1px 0 0 1px;
`
const LogArea = styled.div`
    flex: 1;
    background: #fff;
    border-bottom: 1px solid #000;
`
const LogTable = styled.table`
    th {
        height: 24px;
        padding: 0 6px;
        border-right: 1px solid #dde4ec;
    }
    td {
        height: 20px;
        padding: 0 5px;
        border-right: 1px solid #c0c0c0;
        border-bottom: 1px solid #c0c0c0;
    }
    th:last-child, td:last-child {
        border-right: 0;
    }
    tbody tr:nth-child(odd) {
        background: #ebebeb;
    }
`
const LogTime = styled.span`
    display: flex;
    align-items: center;
    gap: 5px;
`
const LogIcon = styled.span`
    width: 13px;
    margin-left: -1px;
    display: grid;
    place-items: center;
`
const DockTabs = styled.div`
    display: flex;
    align-items: flex-start;
    height: 22px;
    padding-left: 1px;
`
const DockTab = styled.button`
    height: 20px;
    padding: 0 10px 0 11px;
    color: #777;
    background: linear-gradient(#777, #777) right 3px / 1px 13px no-repeat;
    ${p => p.$plain && `
        background: none;
    `}
    ${p => p.$on && `
        height: 21px;
        margin-top: -1px;
        padding: 2px 8px 0;
        color: #000;
        background: #fff;
        border: solid #000;
        border-width: 0 2px 2px 1px;
    `}
    sub {
        margin-left: 2px;
        color: #e02020;
        font-size: 9px;
        line-height: 9px;
    }
`
const TesterDock = styled.section`
    display: flex;
    height: 30px;
    padding: 4px 3px 3px 0;
    border-bottom: 1px solid #a0a0a0;
`
const TesterSide = styled.div`
    width: 15px;
`
const TesterGrip = styled.i`
    display: block;
    width: 4px;
    height: 8px;
    margin-left: 5px;
    background: repeating-linear-gradient(#a0a0a0 0 1px, #f0f0f0 1px 2px);
`
const TesterBox = styled.div`
    flex: 1;
    display: flex;
    align-items: center;
    gap: 5px;
    padding-left: 4px;
    background: #fff;
    border: solid #a0a0a0;
    border-width: 1px 0 0 1px;
`
const StatusBar = styled.footer`
    display: grid;
    grid-template-columns: 1fr 116px 102px 71px 71px 69px 69px 66px 149px;
    height: 23px;
    padding: 3px 0 1px;
`
const StatusCell = styled.div`
    display: flex;
    align-items: center;
    gap: 4px;
    padding-left: 5px;
    border-left: 1px solid #a0a0a0;
    &:first-child {
        border-left: 0;
        padding-left: 2px;
    }
`
const Grip = styled.span`
    margin-left: auto;
`
const EditorBar = styled.footer`
    display: flex;
    height: 22px;
    margin-right: 5px;
    background: #f0f0f0;
    border-right: 1px solid #a0a0a0;
    border-bottom: 1px solid #a0a0a0;
`
const EditorCell = styled.div`
    width: 109px;
    padding: 3px 5px;
    border-left: 1px solid #a0a0a0;
    &:first-child {
        flex: 1;
        padding-left: 0;
        border: 0;
    }
    &:last-child {
        width: 41px;
    }
`
const BottomEdge = styled.div`
    height: 3px;
    overflow: hidden;
    text-align: right;
    padding-right: 90px;
    color: #555;
    font-size: 12px;
    line-height: 2px;
`
